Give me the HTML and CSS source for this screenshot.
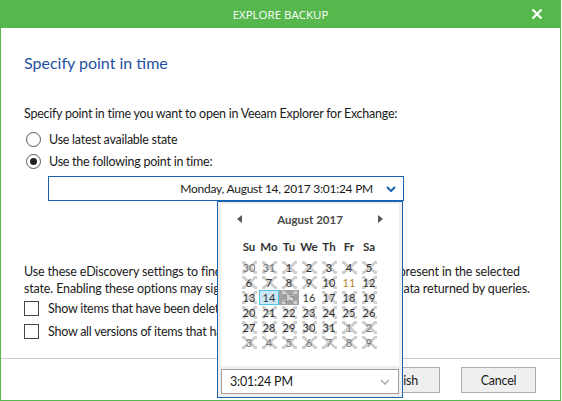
FILE: index.html
```html
<!DOCTYPE html>
<html>
<head>
<meta charset="utf-8">
<link rel="stylesheet" href="styles.css">
</head>
<body>
<div class="titlebar">
  <span class="title">EXPLORE BACKUP</span>
  <svg class="close" width="12" height="12" viewBox="0 0 12 12"><path d="M1.5 1.5L10.5 10.5M10.5 1.5L1.5 10.5" stroke="#fff" stroke-width="2.2" fill="none"/></svg>
</div>
<div class="window">
  <div class="main">
    <h1 class="heading">Specify point in time</h1>
    <p class="intro">Specify point in time you want to open in Veeam Explorer for Exchange:</p>
    <div class="radio-row first"><span class="radio"></span><span>Use latest available state</span></div>
    <div class="radio-row"><span class="radio checked"></span><span>Use the following point in time:</span></div>
    <div class="picker">
      <span class="picker-text">Monday, August 14, 2017 3:01:24 PM</span>
      <svg class="picker-chev" width="10" height="6" viewBox="0 0 10 6"><path d="M1 1L5 5L9 1" stroke="#1a63b0" stroke-width="2" fill="none"/></svg>
    </div>
    <p class="note">Use these eDiscovery settings to find items that were deleted, but still present in the selected<br>state. Enabling these options may significantly increase the amount of data returned by queries.</p>
    <div class="check-row"><span class="check"></span><span>Show items that have been deleted by user</span></div>
    <div class="check-row"><span class="check"></span><span>Show all versions of items that have been modified by user</span></div>
  </div>
  <div class="footer">
    <button class="btn">Next &gt;</button>
    <button class="btn">Finish</button>
    <button class="btn gap">Cancel</button>
  </div>

  <div class="popup">
    <div class="cal">
      <div class="cal-head">
        <span class="arrow left"></span>
        <span class="month">August 2017</span>
        <span class="arrow right"></span>
      </div>
      <div class="grid">
        <span class="dn">Su</span><span class="dn">Mo</span><span class="dn">Tu</span><span class="dn">We</span><span class="dn">Th</span><span class="dn">Fr</span><span class="dn">Sa</span>
        <span class="d x out">30</span><span class="d x out">31</span><span class="d x">1</span><span class="d x">2</span><span class="d x">3</span><span class="d x">4</span><span class="d x">5</span>
        <span class="d x">6</span><span class="d x">7</span><span class="d x">8</span><span class="d x">9</span><span class="d x">10</span><span class="d avail">11</span><span class="d x">12</span>
        <span class="d x">13</span><span class="d sel">14</span><span class="d x today">15</span><span class="d">16</span><span class="d x">17</span><span class="d x">18</span><span class="d x">19</span>
        <span class="d x">20</span><span class="d x">21</span><span class="d x">22</span><span class="d x">23</span><span class="d x">24</span><span class="d x">25</span><span class="d x">26</span>
        <span class="d x">27</span><span class="d x">28</span><span class="d x">29</span><span class="d x">30</span><span class="d x">31</span><span class="d x out">1</span><span class="d x out">2</span>
        <span class="d x out">3</span><span class="d x out">4</span><span class="d x out">5</span><span class="d x out">6</span><span class="d x out">7</span><span class="d x out">8</span><span class="d x out">9</span>
      </div>
    </div>
    <div class="timebox">
      <span>3:01:24 PM</span>
      <svg width="10" height="6" viewBox="0 0 10 6"><path d="M1 1L5 5L9 1" stroke="#b0b0b0" stroke-width="1.6" fill="none"/></svg>
    </div>
  </div>
</div>
</body>
</html>
```
FILE: styles.css
```css
html, body {
  margin: 0;
  padding: 0;
}
body {
  width: 562px;
  height: 401px;
  overflow: hidden;
  background: #fff;
  font-family: Lato, "Open Sans", sans-serif;
  font-size: 12.5px;
  letter-spacing: -0.25px;
  color: #1a1a1a;
}
.titlebar {
  height: 28px;
  width: 561px;
  background: #56b84c;
  display: flex;
  align-items: center;
  justify-content: center;
  position: relative;
}
.title {
  color: #fff;
  font-family: "Open Sans", sans-serif;
  font-size: 11.5px;
  letter-spacing: 0;
}
.close {
  position: absolute;
  left: 531px;
  top: 8px;
}
.window {
  position: relative;
  width: 561px;
  height: 373px;
  box-sizing: border-box;
  border: 1px solid #56b84c;
  border-top: none;
  display: flex;
  flex-direction: column;
}
.main {
  padding: 0 23px;
}
.heading {
  margin: 24px 0 0;
  font-weight: normal;
  font-size: 16px;
  letter-spacing: 0;
  line-height: 22px;
  color: #1f4f9f;
}
.intro {
  margin: 31px 0 0;
  line-height: 18px;
}
.radio-row, .check-row {
  display: flex;
  align-items: center;
  gap: 8px;
  height: 22px;
}
.radio-row.first { margin-top: 5px; }
.radio {
  width: 13px;
  height: 13px;
  border: 1px solid #555;
  border-radius: 50%;
  margin-left: 2px;
  display: flex;
  align-items: center;
  justify-content: center;
  box-sizing: content-box;
}
.radio.checked::after {
  content: "";
  width: 7px;
  height: 7px;
  border-radius: 50%;
  background: #222;
}
.picker {
  margin: 4px 0 0 24px;
  width: 356px;
  height: 25px;
  box-sizing: border-box;
  border: 1px solid #1a63b0;
  display: flex;
  align-items: center;
  justify-content: flex-end;
  padding-right: 7px;
  gap: 13px;
}
.picker-text {
  font-size: 12px;
}
.note {
  margin: 62px 0 0;
  line-height: 17px;
  white-space: nowrap;
  letter-spacing: -0.15px;
}
.check-row {
  height: 23px;
  gap: 9px;
}
.check {
  width: 13px;
  height: 13px;
  border: 1px solid #444;
  box-sizing: content-box;
}
.footer {
  margin-top: auto;
  border-top: 1px solid #ccc;
  height: 42px;
  box-sizing: border-box;
  display: flex;
  justify-content: flex-end;
  align-items: flex-start;
  padding: 8px 24px 0 0;
  gap: 3px;
}
.btn {
  width: 75px;
  height: 26px;
  border: 1px solid #adadad;
  background: #efefef;
  font-family: inherit;
  font-size: 12.5px;
  letter-spacing: -0.2px;
  color: #1a1a1a;
  padding: 0;
}
.btn.gap { margin-left: 18px; }
.popup {
  position: absolute;
  left: 216px;
  top: 173px;
  width: 186px;
  height: 197px;
  box-sizing: border-box;
  border: 1px solid #1a63b0;
  background: #f0f0f0;
  padding: 2px 3px 3px;
  display: flex;
  flex-direction: column;
  gap: 3px;
  letter-spacing: 0;
}
.cal {
  background: #fff;
  height: 162px;
  padding-top: 4px;
  box-sizing: border-box;
}
.cal-head {
  display: flex;
  align-items: center;
  justify-content: space-between;
  padding: 0 16px;
  height: 22px;
}
.arrow {
  width: 0;
  height: 0;
  border-top: 4.5px solid transparent;
  border-bottom: 4.5px solid transparent;
}
.arrow.left { border-right: 5px solid #555; }
.arrow.right { border-left: 5px solid #555; }
.month {
  font-weight: bold;
  font-size: 11.5px;
  color: #4a4a4a;
}
.grid {
  display: grid;
  grid-template-columns: repeat(7, 20px);
  grid-template-rows: 30px repeat(6, 15px);
  margin: 0 0 0 18px;
  font-size: 11px;
  line-height: 15px;
}
.dn {
  font-weight: bold;
  color: #333;
  text-align: center;
  padding-top: 9px;
  font-size: 11.5px;
}
.d {
  text-align: center;
  color: #333;
  box-sizing: border-box;
}
.d.x {
  background:
    linear-gradient(to top right, transparent 42%, #cfcfcf 42%, #cfcfcf 58%, transparent 58%) center / 15px 13px no-repeat,
    linear-gradient(to bottom right, transparent 42%, #cfcfcf 42%, #cfcfcf 58%, transparent 58%) center / 15px 13px no-repeat;
}
.d.out { color: #777; }
.d.avail { color: #b8862e; }
.d.sel {
  background: #cde8f5;
  border: 1px solid #4cc6ee;
  line-height: 13px;
}
.d.today {
  background-color: #a3a3a3;
  color: #888;
}
.timebox {
  height: 25px;
  box-sizing: border-box;
  border: 1px solid #a0a0a0;
  background: #fff;
  display: flex;
  align-items: center;
  justify-content: space-between;
  padding: 0 8px 0 8px;
  font-size: 12.5px;
  letter-spacing: -0.2px;
}
```
